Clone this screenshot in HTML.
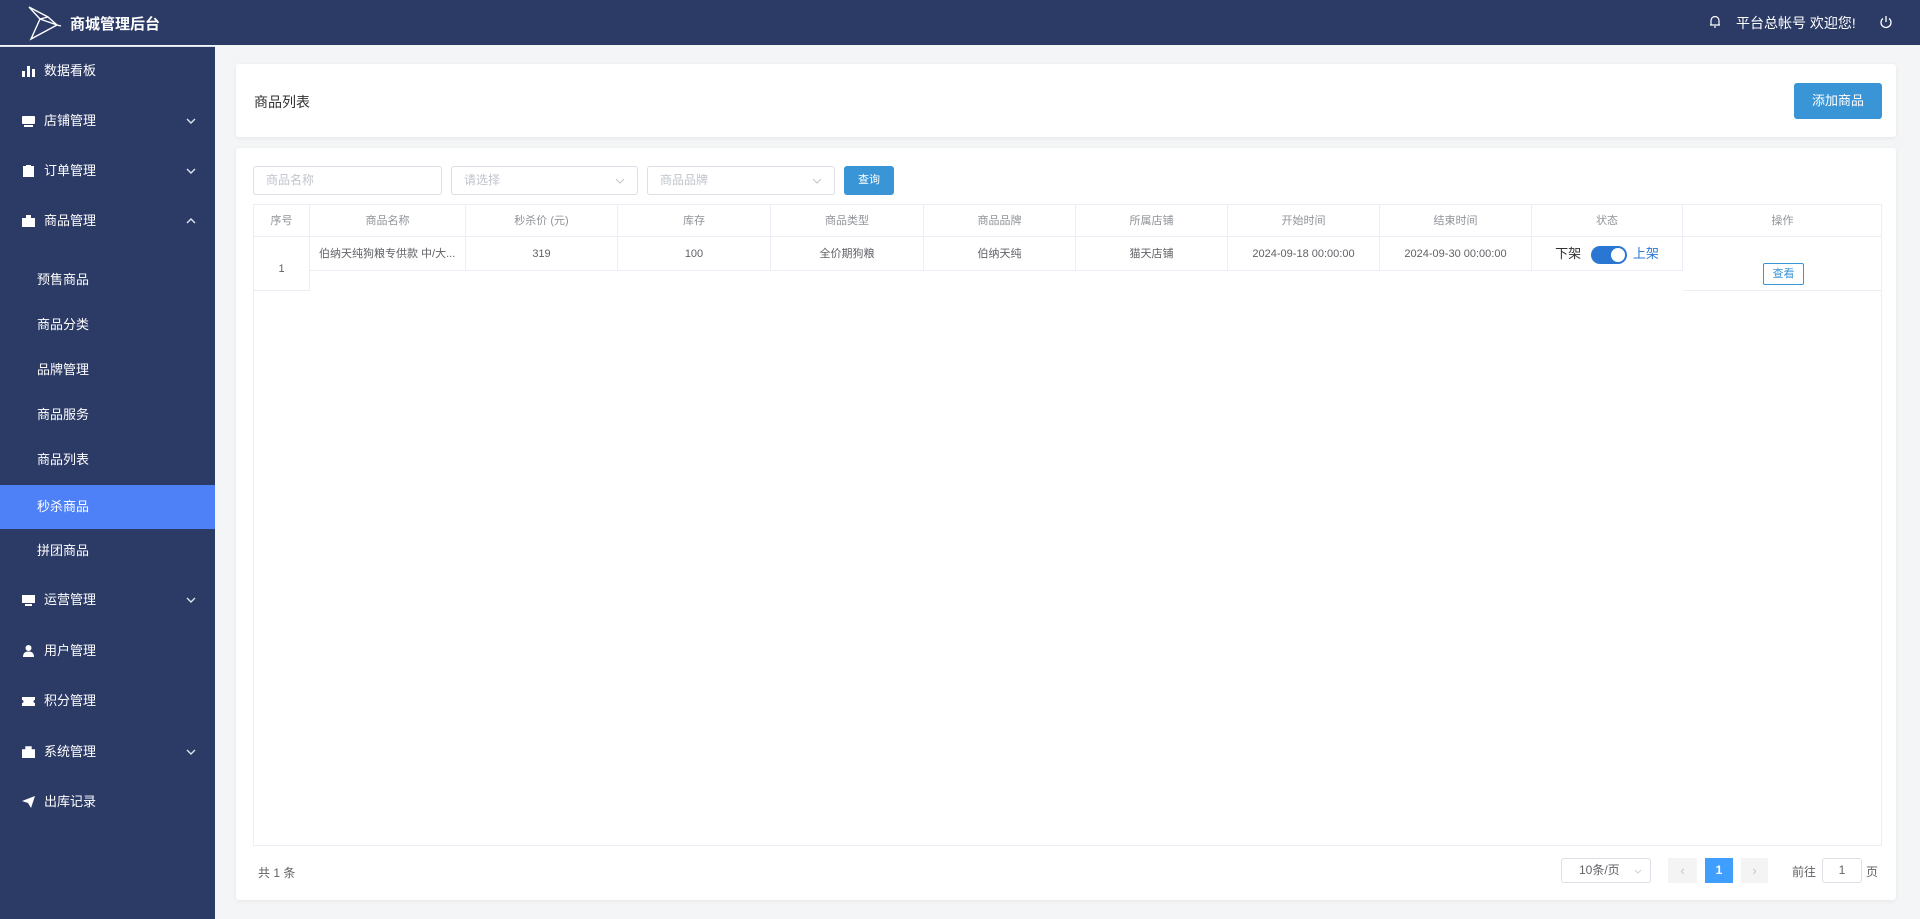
<!DOCTYPE html>
<html><head><meta charset="utf-8"><style>
*{margin:0;padding:0;box-sizing:border-box}
body{width:1920px;height:919px;overflow:hidden;background:#f4f5f6;font-family:"Liberation Sans","Noto Sans CJK SC",sans-serif;font-size:13px;color:#606266;position:relative}
.abs{position:absolute}
.hdr{left:0;top:0;width:1920px;height:45px;background:#2c3a66}
.side{left:0;top:46px;width:215px;height:873px;background:#2c3a66;border-top:1px solid #dde}
.mi{position:absolute;left:0;width:215px;height:40px;line-height:40px;color:#fff;font-size:13px}
.mi .ic{position:absolute;left:22px;top:14px;width:13px;height:12px}
.mi .t{position:absolute;left:44px}
.mi .ch{position:absolute;left:186px;top:17px;width:10px;height:6px}
.sub{position:absolute;left:0;width:215px;height:44px;line-height:44px;color:#fff;font-size:13px;padding-left:37px}
.card{background:#fff;border-radius:3px;box-shadow:0 1px 4px rgba(0,0,0,.06)}
.inp{position:absolute;height:29px;border:1px solid #dcdfe6;border-radius:3px;background:#fff;color:#c0c4cc;font-size:12px;line-height:27px;padding-left:12px}
.inp .a{position:absolute;right:12px;top:11px;width:10px;height:6px}
.tb{left:253px;top:204px;width:1629px;height:642px;border:1px solid #ebeef5}
.th{position:absolute;top:0;height:32px;line-height:32px;text-align:center;font-size:11px;color:#909399;border-right:1px solid #ebeef5;border-bottom:1px solid #ebeef5}
.td{position:absolute;top:32px;height:34px;line-height:34px;text-align:center;font-size:11px;color:#606266;border-right:1px solid #ebeef5;border-bottom:1px solid #ebeef5;white-space:nowrap;overflow:hidden}
</style></head><body>
<div class="abs hdr">
<svg class="abs" style="left:26px;top:5px" width="36" height="36" viewBox="0 0 36 36" fill="none" stroke="#fff" stroke-width="1.4"><path d="M3 2 L14 14 L5 34 L31 20 L14 14 M3 2 L22 12 L31 20 M14 14 L22 12 M31 20 L35 21"/></svg>
<div class="abs" style="left:70px;top:13px;color:#fff;font-size:15px;font-weight:bold">商城管理后台</div>
<svg class="abs" style="left:1709px;top:15px" width="12" height="13" viewBox="0 0 12 13" fill="none" stroke="#fff" stroke-width="1.2"><path d="M2 10 V5.5 A4 4 0 0 1 10 5.5 V10 Z M1 10 H11 M5 12 H7"/></svg>
<div class="abs" style="left:1736px;top:13px;color:#fff;font-size:14px">平台总帐号 欢迎您!</div>
<svg class="abs" style="left:1879px;top:15px" width="14" height="14" viewBox="0 0 14 14" fill="none" stroke="#fff" stroke-width="1.3"><path d="M4 3.5 A5 5 0 1 0 10 3.5 M7 1 V7"/></svg>
</div>
<div class="abs side">
<div class="mi" style="top:4px"><svg class="ic" viewBox="0 0 13 12" fill="#fff"><rect x="0" y="6" width="3" height="6"/><rect x="5" y="1" width="3" height="11"/><rect x="10" y="4" width="3" height="8"/></svg><span class="t">数据看板</span></div>
<div class="mi" style="top:54px"><svg class="ic" viewBox="0 0 13 12" fill="#fff"><rect x="0" y="1" width="13" height="8" rx="1"/><rect x="2" y="10" width="9" height="2"/></svg><span class="t">店铺管理</span><svg class="ch" viewBox="0 0 10 6" fill="none" stroke="#dfe3ee" stroke-width="1.4"><path d="M1 1 L5 5 L9 1"/></svg></div>
<div class="mi" style="top:104px"><svg class="ic" viewBox="0 0 13 12" fill="#fff"><path d="M1 1h11v11H1z M4 0h5v2H4z"/></svg><span class="t">订单管理</span><svg class="ch" viewBox="0 0 10 6" fill="none" stroke="#dfe3ee" stroke-width="1.4"><path d="M1 1 L5 5 L9 1"/></svg></div>
<div class="mi" style="top:154px"><svg class="ic" viewBox="0 0 13 12" fill="#fff"><path d="M0 3h13v9H0z M4 0h5v3H4z"/></svg><span class="t">商品管理</span><svg class="ch" viewBox="0 0 10 6" fill="none" stroke="#dfe3ee" stroke-width="1.4"><path d="M1 5 L5 1 L9 5"/></svg></div>
<div class="sub" style="top:211px">预售商品</div>
<div class="sub" style="top:256px">商品分类</div>
<div class="sub" style="top:301px">品牌管理</div>
<div class="sub" style="top:346px">商品服务</div>
<div class="sub" style="top:391px">商品列表</div>
<div class="sub" style="top:438px;background:#4e80f8">秒杀商品</div>
<div class="sub" style="top:482px">拼团商品</div>
<div class="mi" style="top:533px"><svg class="ic" viewBox="0 0 13 12" fill="#fff"><rect x="0" y="1" width="13" height="8"/><rect x="3" y="10" width="7" height="2"/></svg><span class="t">运营管理</span><svg class="ch" viewBox="0 0 10 6" fill="none" stroke="#dfe3ee" stroke-width="1.4"><path d="M1 1 L5 5 L9 1"/></svg></div>
<div class="mi" style="top:584px"><svg class="ic" viewBox="0 0 13 12" fill="#fff"><circle cx="6.5" cy="3" r="3"/><path d="M1 12 Q1 6.5 6.5 6.5 Q12 6.5 12 12z"/></svg><span class="t">用户管理</span></div>
<div class="mi" style="top:634px"><svg class="ic" viewBox="0 0 13 12" fill="#fff"><path d="M0 2h13v3a1.5 1.5 0 0 0 0 3v3H0V8a1.5 1.5 0 0 0 0-3z"/></svg><span class="t">积分管理</span></div>
<div class="mi" style="top:685px"><svg class="ic" viewBox="0 0 13 12" fill="#fff"><path d="M0 4h13v8H0z M4 4V1h5v3" stroke="#fff" stroke-width="1.4"/></svg><span class="t">系统管理</span><svg class="ch" viewBox="0 0 10 6" fill="none" stroke="#dfe3ee" stroke-width="1.4"><path d="M1 1 L5 5 L9 1"/></svg></div>
<div class="mi" style="top:735px"><svg class="ic" viewBox="0 0 13 12" fill="#fff"><path d="M0 5 L13 0 L9 12 L6 7z"/></svg><span class="t">出库记录</span></div>
</div>

<div class="abs card" style="left:236px;top:64px;width:1660px;height:73px">
<div class="abs" style="left:18px;top:28px;font-size:14px;color:#303133">商品列表</div>
<div class="abs" style="left:1558px;top:19px;width:88px;height:36px;background:#3a95d6;border-radius:3px;color:#fff;font-size:13px;text-align:center;line-height:36px">添加商品</div>
</div>

<div class="abs card" style="left:236px;top:148px;width:1660px;height:752px"></div>
<div class="inp" style="left:253px;top:166px;width:189px">商品名称</div>
<div class="inp" style="left:451px;top:166px;width:187px">请选择<svg class="a" viewBox="0 0 10 6" fill="none" stroke="#c0c4cc" stroke-width="1"><path d="M1 1 L5 5 L9 1"/></svg></div>
<div class="inp" style="left:647px;top:166px;width:188px">商品品牌<svg class="a" viewBox="0 0 10 6" fill="none" stroke="#c0c4cc" stroke-width="1"><path d="M1 1 L5 5 L9 1"/></svg></div>
<div class="abs" style="left:844px;top:166px;width:50px;height:29px;background:#3a95d6;border-radius:3px;color:#fff;font-size:11px;text-align:center;line-height:29px">查询</div>

<div class="abs tb">
<div class="th" style="left:0;width:56px">序号</div>
<div class="th" style="left:56px;width:156px">商品名称</div>
<div class="th" style="left:212px;width:152px">秒杀价 (元)</div>
<div class="th" style="left:364px;width:153px">库存</div>
<div class="th" style="left:517px;width:153px">商品类型</div>
<div class="th" style="left:670px;width:152px">商品品牌</div>
<div class="th" style="left:822px;width:152px">所属店铺</div>
<div class="th" style="left:974px;width:152px">开始时间</div>
<div class="th" style="left:1126px;width:152px">结束时间</div>
<div class="th" style="left:1278px;width:151px">状态</div>
<div class="th" style="left:1429px;width:199px;border-right:none">操作</div>
<div class="td" style="left:0;width:56px;height:54px;line-height:64px">1</div>
<div class="td" style="left:56px;width:156px;text-align:left;padding-left:9px">伯纳天纯狗粮专供款 中/大...</div>
<div class="td" style="left:212px;width:152px">319</div>
<div class="td" style="left:364px;width:153px">100</div>
<div class="td" style="left:517px;width:153px">全价期狗粮</div>
<div class="td" style="left:670px;width:152px">伯纳天纯</div>
<div class="td" style="left:822px;width:152px">猫天店铺</div>
<div class="td" style="left:974px;width:152px">2024-09-18 00:00:00</div>
<div class="td" style="left:1126px;width:152px">2024-09-30 00:00:00</div>
<div class="td" style="left:1278px;width:151px;font-size:13px"><span style="color:#303133">下架</span> <span style="display:inline-block;vertical-align:middle;width:36px;height:18px;border-radius:9px;background:#2a77d3;position:relative;margin:0 6px"><span style="position:absolute;right:2px;top:2px;width:14px;height:14px;border-radius:50%;background:#fff"></span></span><span style="color:#2a77d3">上架</span></div>
<div class="td" style="left:1429px;width:199px;height:54px;border-right:none"><span style="position:absolute;left:80px;top:26px;width:41px;height:22px;border:1px solid #3a95d6;border-radius:2px;color:#3a95d6;font-size:11px;line-height:20px">查看</span></div>
</div>

<div class="abs" style="left:258px;top:864px;font-size:12px;color:#606266">共 1 条</div>
<div class="abs" style="left:1561px;top:858px;width:90px;height:25px;border:1px solid #dcdfe6;border-radius:3px;font-size:12px;line-height:23px;padding-left:17px">10条/页<svg style="position:absolute;right:8px;top:10px" width="8" height="5" viewBox="0 0 10 6" fill="none" stroke="#c0c4cc" stroke-width="1"><path d="M1 1 L5 5 L9 1"/></svg></div>
<div class="abs" style="left:1668px;top:858px;width:29px;height:25px;background:#f4f4f5;color:#c0c4cc;text-align:center;line-height:25px">&#8249;</div>
<div class="abs" style="left:1705px;top:858px;width:28px;height:25px;background:#409eff;color:#fff;text-align:center;line-height:25px;font-weight:bold;font-size:12px">1</div>
<div class="abs" style="left:1741px;top:858px;width:27px;height:25px;background:#f4f4f5;color:#c0c4cc;text-align:center;line-height:25px">&#8250;</div>
<div class="abs" style="left:1792px;top:863px;font-size:12px">前往</div>
<div class="abs" style="left:1822px;top:858px;width:40px;height:25px;border:1px solid #dcdfe6;border-radius:3px;text-align:center;line-height:23px;font-size:12px">1</div>
<div class="abs" style="left:1866px;top:863px;font-size:12px">页</div>
</body></html>
